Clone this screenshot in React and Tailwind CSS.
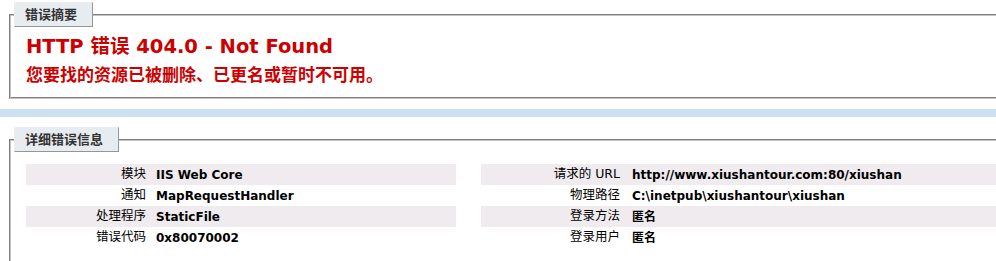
import React from "react";

const font = "font-['DejaVu_Sans','Noto_Sans_CJK_SC',sans-serif]";

function Legend({ children }) {
  return (
    <div className="mt-[-13px] ml-[-12px]">
      <div className="inline-block border border-t-[#ededed] border-l-[#ededed] border-r-[#969696] border-b-[#969696] bg-[#e7ecf0] pt-[4px] pb-[4px] pl-[10px] pr-[15px] text-[13px] leading-[15px] font-bold text-[#333333]">
        {children}
      </div>
    </div>
  );
}

function Row({ label, value, alt, labelW, gap }) {
  return (
    <div className={`flex h-[21px] items-center ${alt ? "bg-[#efebef]" : ""}`}>
      <div className={`${labelW} shrink-0 text-right text-[12.5px] text-black`}>{label}</div>
      <div className={`${gap} whitespace-nowrap text-[12px] font-bold text-black`}>{value}</div>
    </div>
  );
}

export default function App() {
  return (
    <div className={`${font} w-[996px] h-[261px] overflow-hidden bg-[#cbe1ef]`}>
      {/* summary container */}
      <div className="bg-white pt-[14px] pl-[9px] pb-[10px]">
        <div className="mr-[-30px] border border-t-[#7f7f7f] border-l-[#7f7f7f] border-r-[#c4c4c4] border-b-[#c4c4c4] shadow-[inset_1px_1px_0_#c4c4c4,inset_-1px_-1px_0_#7f7f7f] pl-[16px] pb-[12px]">
          <Legend>错误摘要</Legend>
          <div className="mt-[8px] text-[19.5px] leading-[24px] font-bold text-[#cc0000] whitespace-nowrap">
            HTTP 错误 404.0 - Not Found
          </div>
          <div className="mt-[5px] text-[17px] leading-[22px] font-bold text-[#cc0000] whitespace-nowrap">
            您要找的资源已被删除、已更名或暂时不可用。
          </div>
        </div>
      </div>

      {/* content container */}
      <div className="mt-[8px] bg-white pt-[22px] pl-[9px] h-[200px]">
        <div className="mr-[-30px] h-[200px] border border-t-[#7f7f7f] border-l-[#7f7f7f] border-r-[#c4c4c4] border-b-[#c4c4c4] shadow-[inset_1px_1px_0_#c4c4c4,inset_-1px_-1px_0_#7f7f7f] pl-[16px] pr-[10px]">
          <Legend>详细错误信息</Legend>
          <div className="mt-[12px] flex gap-[25px]">
            <div className="w-[430px] shrink-0">
              <Row label="模块" value="IIS Web Core" alt labelW="w-[120px]" gap="pl-[10px]" />
              <Row label="通知" value="MapRequestHandler" labelW="w-[120px]" gap="pl-[10px]" />
              <Row label="处理程序" value="StaticFile" alt labelW="w-[120px]" gap="pl-[10px]" />
              <Row label="错误代码" value="0x80070002" labelW="w-[120px]" gap="pl-[10px]" />
            </div>
            <div className="flex-1">
              <Row label="请求的 URL" value="http://www.xiushantour.com:80/xiushan" alt labelW="w-[139px]" gap="pl-[12px]" />
              <Row label="物理路径" value="C:\inetpub\xiushantour\xiushan" labelW="w-[139px]" gap="pl-[12px]" />
              <Row label="登录方法" value="匿名" alt labelW="w-[139px]" gap="pl-[12px]" />
              <Row label="登录用户" value="匿名" labelW="w-[139px]" gap="pl-[12px]" />
            </div>
          </div>
        </div>
      </div>
    </div>
  );
}
